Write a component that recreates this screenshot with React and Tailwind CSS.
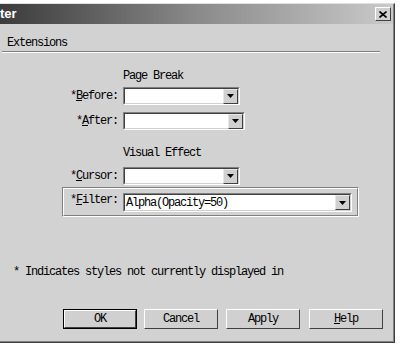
import React from "react";

const mono = { fontFamily: '"Liberation Mono", "DejaVu Sans Mono", monospace' };

function Arrow() {
  return (
    <div className="flex h-[15px] w-[15px] shrink-0 items-center justify-center border-t border-l border-t-[#e8e8e8] border-l-[#e8e8e8] border-r border-b border-r-[#404040] border-b-[#404040] bg-[#d0d0d0]">
      <svg width="7" height="4" viewBox="0 0 7 4">
        <polygon points="0,0 7,0 3.5,4" fill="#000" />
      </svg>
    </div>
  );
}

function Select({ w, h = 18, value }) {
  return (
    <div
      className="flex shrink-0 border border-t-[#808080] border-l-[#808080] border-r-white border-b-white"
      style={{ width: w, height: h }}
    >
      <div className="flex flex-1 items-center border border-t-[#404040] border-l-[#404040] border-r-[#d0d0d0] border-b-[#d0d0d0] bg-white pr-[0px]">
        <div className="flex-1 truncate pl-[1px] text-[12px] leading-[14px] tracking-[-1.2px] text-black">
          {value}
        </div>
        <Arrow />
      </div>
    </div>
  );
}

function Label({ children, w }) {
  return (
    <div
      className="shrink-0 pr-[5px] text-right text-[12px] leading-[14px] tracking-[-1.2px] text-black"
      style={{ width: w }}
    >
      {children}
    </div>
  );
}

function Btn({ children, def, className = "" }) {
  return (
    <div
      className={
        "h-[20px] w-[74px] " +
        (def ? "border border-black " : "") +
        className
      }
    >
      <div className="flex h-full w-full items-center justify-center border border-t-white border-l-white border-r-[#404040] border-b-[#404040] bg-[#d0d0d0]">
        <div className="text-[12px] leading-[14px] tracking-[-1.2px] text-black">{children}</div>
      </div>
    </div>
  );
}

export default function App() {
  return (
    <div className="h-[355px] w-[403px] overflow-hidden bg-white" style={mono}>
      <div className="mt-[3px] h-[340px] w-[395px] border-t border-t-[#e0e0e0] border-r border-b border-r-[#404040] border-b-[#404040]">
        <div className="flex h-full flex-col border-r border-b border-r-[#808080] border-b-[#808080] bg-[#d2d2d2]">
          {/* title bar */}
          <div className="flex h-[20px] items-center bg-gradient-to-r from-[#3c3c3c] via-[#8a8a8a] to-[#cacaca] pr-[2px]">
            <div
              className="flex-1 text-[13px] font-bold leading-[16px] text-white"
              style={{ fontFamily: '"Liberation Sans", Arial, sans-serif' }}
            >
              ter
            </div>
            <div className="flex h-[14px] w-[16px] items-center justify-center border border-t-white border-l-white border-r-[#404040] border-b-[#404040] bg-[#d0d0d0]">
              <svg width="8" height="7" viewBox="0 0 8 7">
                <path d="M0.5 0.5 L7.5 6.5 M7.5 0.5 L0.5 6.5" stroke="#000" strokeWidth="1.6" />
              </svg>
            </div>
          </div>

          {/* tab */}
          <div className="mt-[12px] pl-[7px] text-[12px] leading-[14px] tracking-[-1.2px] text-black">
            Extensions
          </div>
          <div className="ml-[2px] mt-[1px] h-[2px] w-[378px] border-t border-t-[#808080] border-b border-b-white" />

          {/* Page Break */}
          <div className="mt-[16px] pl-[123px] text-[12px] leading-[14px] tracking-[-1.2px] text-black">
            Page Break
          </div>
          <div className="mt-[4px] flex items-center">
            <Label w={123}>
              *<span className="underline">B</span>efore:
            </Label>
            <Select w={117} />
          </div>
          <div className="mt-[7px] flex items-center">
            <Label w={123}>
              *<span className="underline">A</span>fter:
            </Label>
            <Select w={122} />
          </div>

          {/* Visual Effect */}
          <div className="mt-[16px] pl-[123px] text-[12px] leading-[14px] tracking-[-1.2px] text-black">
            Visual Effect
          </div>
          <div className="mt-[7px] flex items-center">
            <Label w={123}>
              *<span className="underline">C</span>ursor:
            </Label>
            <Select w={117} />
          </div>
          <div className="ml-[62px] mt-[2px] h-[30px] w-[297px] border border-t-[#808080] border-l-[#808080] border-r-white border-b-white">
            <div className="flex h-full items-start border border-t-white border-l-white border-r-[#808080] border-b-[#808080] pt-[4px]">
              <Label w={59}>
                *<span className="underline">F</span>ilter:
              </Label>
              <Select w={229} h={19} value="Alpha(Opacity=50)" />
            </div>
          </div>

          {/* footnote */}
          <div className="mt-[48px] pl-[13px] text-[12px] leading-[14px] tracking-[-1.2px] text-black">
            * Indicates styles not currently displayed in
          </div>

          {/* buttons */}
          <div className="mt-[30px] flex">
            <Btn def className="ml-[63px]">OK</Btn>
            <Btn className="ml-[7px]">Cancel</Btn>
            <Btn className="ml-[8px]">Apply</Btn>
            <Btn className="ml-[9px]">
              <span className="underline">H</span>elp
            </Btn>
          </div>
        </div>
      </div>
    </div>
  );
}
